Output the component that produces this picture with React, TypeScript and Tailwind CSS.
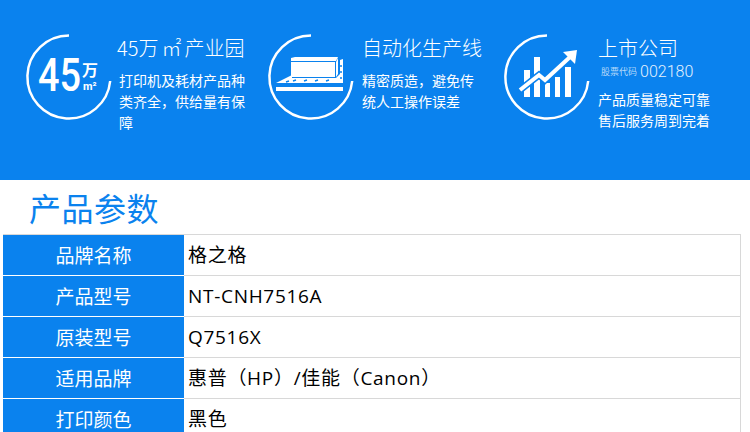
const font = "font-['Open_Sans','Noto_Sans_CJK_SC',sans-serif]"
const cjk = "font-['Noto_Sans_CJK_SC',sans-serif]"

function Ring({ children }: { children: React.ReactNode }) {
  return (
    <svg width="88" height="88" viewBox="0 0 88 88" className="shrink-0">
      {/* open ring, gap at top right */}
      <path d="M44 2.5 A41.5 41.5 0 1 0 85.2 48" fill="none" stroke="white" strokeWidth="2.5" />
      {children}
    </svg>
  )
}

const rows = [
  ['品牌名称', '格之格'],
  ['产品型号', 'NT-CNH7516A'],
  ['原装型号', 'Q7516X'],
  ['适用品牌', '惠普（HP）/佳能（Canon）'],
  ['打印颜色', '黑色'],
]

export default function App() {
  return (
    <div className="w-[750px] h-[432px] overflow-hidden bg-white">
      <div className={`h-[180px] bg-[#0a82ee] text-white flex pt-[33px] pl-[25px] ${cjk}`}>
        <div className="w-[242px] flex">
          <Ring>
            <text x="13" y="58" fontSize="47" fontWeight="500" fill="white" fontFamily="Roboto" textLength="43" lengthAdjust="spacingAndGlyphs">45</text>
            <text x="57" y="43" fontSize="16" fontWeight="700" fill="white">万</text>
            <text x="58" y="57" fontSize="11" fontWeight="700" fill="white" fontFamily="Roboto">m²</text>
          </Ring>
          <div className="ml-[4px] w-[130px]">
            <div className="text-[20px] leading-[30px] whitespace-nowrap font-light">
              45万<span className="mx-[3px]">㎡</span>产业园
            </div>
            <div className="mt-[7px] ml-[2px] text-[14px] leading-[21px]">打印机及耗材产品种类齐全，供给量有保障</div>
          </div>
        </div>
        <div className="w-[236px] flex">
          <Ring>
            <path d="M24 25 L28 24 H71 L69 28 H24 Z" fill="white" />
            <path d="M24 29 H68 V44 H24 Z M69 29 L71 25 V41 L69 44 Z" fill="white" />
            <path d="M9 50 L25 42 V45 H69 L73 41 V27 L76 26 V50 Z" fill="white" />
            <path d="M9 54 H76 V58 H9 Z" fill="white" />
            <path d="M26 48 l3 -1 M37 48 l3 -1 M48 48 l3 -1 M59 48 l3 -1 M19 49 l3 -1 M74 32 v2 M74 38 v2 M74 44 v2" stroke="#0a82ee" strokeWidth="1.5" />
          </Ring>
          <div className="ml-[7px] w-[115px]">
            <div className="text-[20px] leading-[30px] whitespace-nowrap font-light">自动化生产线</div>
            <div className="mt-[7px] text-[14px] leading-[21px]">精密质造，避免传统人工操作误差</div>
          </div>
        </div>
        <div className="flex">
          <Ring>
            <path d="M21 37 V64 H27 V37 Z M31 24 V64 H37 V24 Z M42 50 V64 H47 V50 Z M52 44 V64 H57 V44 Z M62 34 V64 H68 V34 Z" fill="white" />
            <path d="M17 57 L36 42 L42 47 L67 24" fill="none" stroke="#0a82ee" strokeWidth="7" />
            <path d="M17 57 L36 42 L42 47 L67 24" fill="none" stroke="white" strokeWidth="4" />
            <path d="M60 19 L74 17 L72 31 Z" fill="white" />
          </Ring>
          <div className="ml-[7px] w-[115px]">
            <div className="text-[20px] leading-[30px] whitespace-nowrap font-light">上市公司</div>
            <div className="flex items-center whitespace-nowrap leading-[20px] mt-[-1px] ml-[3px]">
              <span className="text-[9px] text-[#b5d9f9]">股票代码</span>
              <span className="text-[16px] ml-[3px] text-[#e3f1fd] font-['Roboto',sans-serif] font-light">002180</span>
            </div>
            <div className="mt-[7px] text-[14px] leading-[21px]">产品质量稳定可靠售后服务周到完着</div>
          </div>
        </div>
      </div>
      <h2 className={`text-[32px] leading-[54px] text-[#0a82ee] pl-[29px] tracking-[0.5px] ${cjk}`}>产品参数</h2>
      <div className={`ml-[3px] w-[738px] border-t border-r border-[#d8d8d8] ${font}`}>
        {rows.map(([k, v]) => (
          <div key={k} className="flex h-[41px]">
            <div className={`w-[181px] bg-[#0a82ee] text-white text-[19px] flex items-center justify-center border-b border-white ${cjk}`}>{k}</div>
            <div className="flex-1 flex items-center pl-[4px] text-[19px] tracking-[0.7px] text-black border-b border-[#d8d8d8]">{v}</div>
          </div>
        ))}
      </div>
    </div>
  )
}
